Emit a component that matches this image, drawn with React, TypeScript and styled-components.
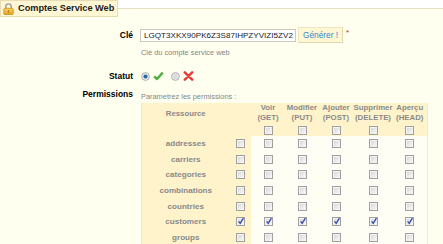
import React from "react";
import styled, { createGlobalStyle } from "styled-components";

const GlobalStyle = createGlobalStyle`
    html, body {
        margin: 0;
        padding: 0;
        background: #ffffff;
    }
    body {
        font-family: "Liberation Sans", Arial, sans-serif;
        color: #000;
    }
`;

const Fieldset = styled.fieldset`
    margin: 0;
    padding: 0 0 4px 0;
    border: 0;
    border-top: 1px solid #e6dfc8;
    background: #fffff0;
`;

const Legend = styled.legend`
    display: flex;
    align-items: center;
    gap: 4px;
    margin: 0;
    padding: 1px 3px 1px 2px;
    height: 13px;
    background: #fff6d3;
    border: 1px solid #e8dcb4;
    font-size: 9.2px;
    font-weight: bold;
    color: #1c1c1c;
    line-height: 13px;
`;

const FormRow = styled.div<{ $top: number }>`
    display: grid;
    grid-template-columns: 133px 1fr;
    column-gap: 7px;
    margin-top: ${(p) => p.$top}px;
`;

const Label = styled.label<{ $lh: number }>`
    text-align: right;
    font-size: 8.5px;
    font-weight: bold;
    line-height: ${(p) => p.$lh}px;
    color: #000;
`;

const Field = styled.div<{ $pad?: number }>`
    padding-top: ${(p) => p.$pad || 0}px;
`;

const InputLine = styled.div`
    display: flex;
    align-items: flex-start;
`;

const KeyInput = styled.input`
    box-sizing: border-box;
    width: 156px;
    height: 13px;
    margin: 2px 2px 0 0;
    padding: 0 0 0 3px;
    border: 1px solid #cfc9b8;
    background: #fff;
    font-family: "Liberation Sans", Arial, sans-serif;
    font-size: 8.1px;
    color: #222;
    outline: none;
`;

const GenerateButton = styled.button`
    box-sizing: border-box;
    width: 45px;
    height: 16px;
    padding: 0;
    border: 1px solid #efe5c2;
    border-right-color: #e2d6ae;
    border-bottom-color: #e2d6ae;
    background: #fff6d3;
    color: #2e8ccc;
    font-family: "Liberation Sans", Arial, sans-serif;
    font-size: 8.3px;
    line-height: 14px;
`;

const Required = styled.sup`
    color: #e02020;
    font-size: 8px;
    line-height: 8px;
    margin: 2px 0 0 3px;
    vertical-align: top;
`;

const Help = styled.p<{ $top: number }>`
    margin: ${(p) => p.$top}px 0 0 1px;
    font-size: 7.4px;
    line-height: 9px;
    color: #858585;
`;

const StatusLine = styled.div`
    display: flex;
    align-items: center;
    height: 10px;
    gap: 3px;
    padding-left: 1px;
`;

const Table = styled.table`
    margin-top: 2px;
    margin-left: 1px;
    border-collapse: collapse;
    table-layout: fixed;
    width: 286px;
    border-left: 1px solid #f3ebcf;
    border-right: 1px solid #f3ebcf;
`;

const HeadCell = styled.th<{ $middle?: boolean }>`
    background: #fff3cc;
    padding: 0;
    height: 21px;
    font-size: 7.8px;
    font-weight: bold;
    line-height: 10px;
    color: #8a8a8a;
    text-align: center;
    vertical-align: ${(p) => (p.$middle ? "middle" : "top")};
    white-space: nowrap;
`;

const BoxCell = styled.td<{ $head?: boolean }>`
    background: ${(p) => (p.$head ? "#fff3cc" : "#fffef5")};
    padding: 0;
    height: ${(p) => (p.$head ? 12 : 15.6)}px;
    text-align: center;
    vertical-align: middle;
    line-height: 0;
`;

const NameCell = styled.th`
    background: #fff3cc;
    padding: 0;
    height: 15.6px;
    font-size: 8.1px;
    font-weight: bold;
    color: #8a8a8a;
    text-align: center;
    vertical-align: middle;
`;

const Box = styled.span`
    display: inline-block;
    box-sizing: border-box;
    width: 9px;
    height: 9px;
    border: 1px solid #a0a0a0;
    background: linear-gradient(135deg, #d2d2d2 0%, #ececec 60%, #fafafa 100%);
    box-shadow: inset 1px 1px 0 #f4f4f4;
    position: relative;
`;

const Tick = styled.svg`
    position: absolute;
    left: 0;
    top: -1px;
`;

function Checkbox({ checked }: { checked?: boolean }) {
    return (
        <Box>
            {checked && (
                <Tick width="8" height="8" viewBox="0 0 8 8">
                    <path d="M1.6 4.4 L3.2 6.4 L6.4 1.2" fill="none" stroke="#2f47a8" strokeWidth="1.3" />
                </Tick>
            )}
        </Box>
    );
}

function LockIcon() {
    return (
        <svg width="11" height="12" viewBox="0 0 11 12">
            <defs>
                <linearGradient id="lockBody" x1="0" y1="0" x2="0" y2="1">
                    <stop offset="0" stopColor="#f8d66a" />
                    <stop offset="1" stopColor="#e2a21e" />
                </linearGradient>
            </defs>
            <path d="M2.8 5.5 V3.6 A2.7 2.7 0 0 1 8.2 3.6 V5.5" fill="none" stroke="#9b9b9b" strokeWidth="1.4" />
            <rect x="0.8" y="5.3" width="9.4" height="6.2" rx="0.8" fill="url(#lockBody)" stroke="#c98d1b" strokeWidth="0.8" />
            <rect x="4.8" y="7.2" width="1.4" height="2.4" fill="#b57a12" />
        </svg>
    );
}

function Radio({ on }: { on?: boolean }) {
    return (
        <svg width="9" height="9" viewBox="0 0 9 9">
            <circle cx="4.5" cy="4.5" r="3.9" fill={on ? "#e9eef2" : "#ececec"} stroke="#a9a9a9" strokeWidth="0.9" />
            {on && <circle cx="4.5" cy="4.5" r="2.1" fill="#2a6a9c" />}
            {!on && <circle cx="4.5" cy="4.5" r="2.6" fill="#dcdcdc" />}
        </svg>
    );
}

function CheckIcon() {
    return (
        <svg width="11" height="10" viewBox="0 0 11 10">
            <path d="M1.2 5.4 L4 8 L9.8 1.6" fill="none" stroke="#4fae3c" strokeWidth="2.4" strokeLinejoin="round" />
        </svg>
    );
}

function CrossIcon() {
    return (
        <svg width="11" height="10" viewBox="0 0 11 10">
            <path d="M1.8 1.4 L9.2 8.6 M9.2 1.4 L1.8 8.6" stroke="#e83a3a" strokeWidth="2.5" strokeLinecap="round" />
        </svg>
    );
}

const methods: [string, string][] = [
    ["Voir", "(GET)"],
    ["Modifier", "(PUT)"],
    ["Ajouter", "(POST)"],
    ["Supprimer", "(DELETE)"],
    ["Aperçu", "(HEAD)"],
];

const colWidths = [88, 21, 35, 33, 35, 39, 35];

const resources = [
    { name: "addresses", on: false },
    { name: "carriers", on: false },
    { name: "categories", on: false },
    { name: "combinations", on: false },
    { name: "countries", on: false },
    { name: "customers", on: true },
    { name: "groups", on: false },
];

export default function App() {
    return (
        <>
            <GlobalStyle />
            <Fieldset>
                <Legend>
                    <LockIcon />
                    Comptes Service Web
                </Legend>

                <FormRow $top={10}>
                    <Label $lh={16}>Clé</Label>
                    <Field>
                        <InputLine>
                            <KeyInput readOnly value="LGQT3XKX90PK6Z3S87IHPZYVIZI5ZV2" />
                            <GenerateButton>Générer !</GenerateButton>
                            <Required>*</Required>
                        </InputLine>
                        <Help $top={5}>Clé du compte service web</Help>
                    </Field>
                </FormRow>

                <FormRow $top={14}>
                    <Label $lh={10}>Statut</Label>
                    <StatusLine>
                        <Radio on />
                        <CheckIcon />
                        <span style={{ width: 1 }} />
                        <Radio />
                        <CrossIcon />
                    </StatusLine>
                </FormRow>

                <FormRow $top={8}>
                    <Label $lh={10}>Permissions</Label>
                    <Field $pad={3}>
                        <Help $top={0}>Parametrez les permissions :</Help>
                        <Table>
                            <colgroup>
                                {colWidths.map((w, i) => (
                                    <col key={i} style={{ width: w }} />
                                ))}
                            </colgroup>
                            <thead>
                                <tr>
                                    <HeadCell $middle>Ressource</HeadCell>
                                    <HeadCell />
                                    {methods.map(([verb, http]) => (
                                        <HeadCell key={verb}>
                                            {verb}
                                            <br />
                                            {http}
                                        </HeadCell>
                                    ))}
                                </tr>
                                <tr>
                                    <BoxCell $head />
                                    <BoxCell $head />
                                    {methods.map(([verb]) => (
                                        <BoxCell $head key={verb}>
                                            <Checkbox />
                                        </BoxCell>
                                    ))}
                                </tr>
                            </thead>
                            <tbody>
                                {resources.map((r) => (
                                    <tr key={r.name}>
                                        <NameCell>{r.name}</NameCell>
                                        <BoxCell $head>
                                            <Checkbox checked={r.on} />
                                        </BoxCell>
                                        {methods.map(([verb]) => (
                                            <BoxCell key={verb}>
                                                <Checkbox checked={r.on} />
                                            </BoxCell>
                                        ))}
                                    </tr>
                                ))}
                            </tbody>
                        </Table>
                    </Field>
                </FormRow>
            </Fieldset>
        </>
    );
}
